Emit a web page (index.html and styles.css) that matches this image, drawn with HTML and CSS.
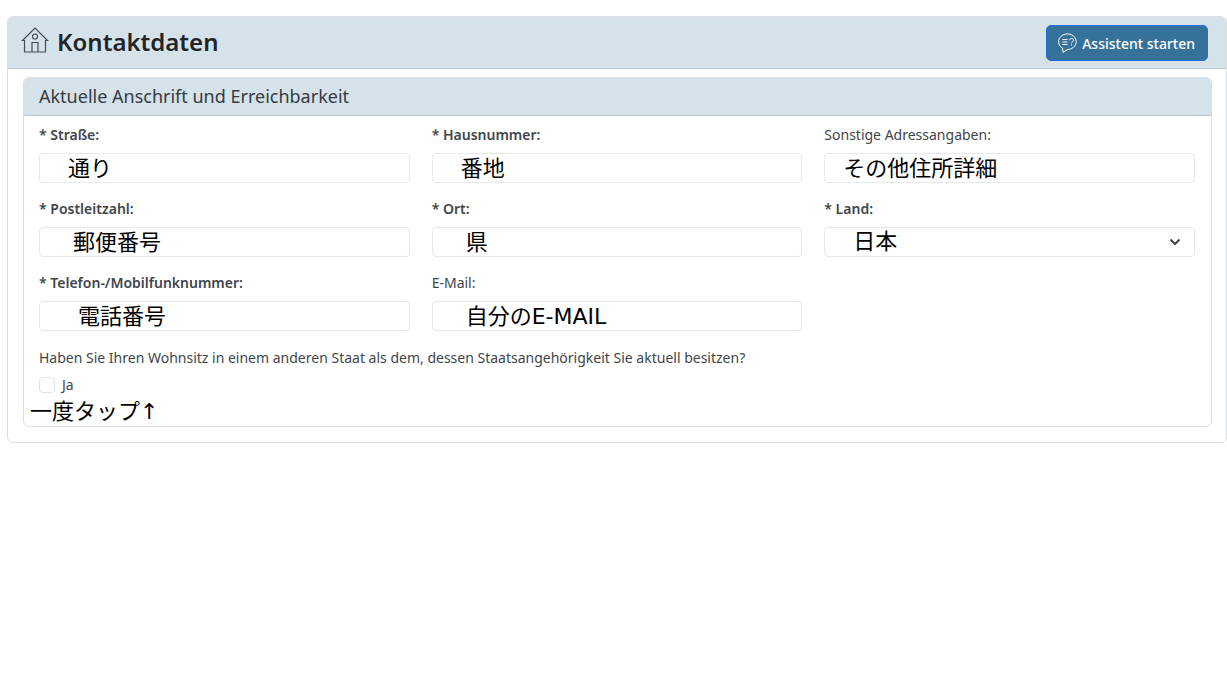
FILE: index.html
```html
<!DOCTYPE html>
<html lang="de">
<head>
<meta charset="UTF-8" />
<meta name="viewport" content="width=device-width, initial-scale=1" />
<title>Kontaktdaten</title>
<link rel="stylesheet" href="styles.css">
</head>
<body>

<main class="card">
  <header class="card-header">
    <svg class="icon-house" viewBox="0 0 28 28" aria-hidden="true">
      <path d="M1.500 15.500 14 3 26.500 15.500H24.500V27H3.500V15.500Z" />
      <circle cx="14" cy="11.500" r="2.500" />
      <path d="M11 27v-9.500h6V27" />
    </svg>
    <h1>Kontaktdaten</h1>
    <button type="button" class="btn-assistant">
      <svg class="icon-chat" viewBox="0 0 20 20" aria-hidden="true">
        <path d="M4.500 15.200A8.800 7.800 0 1 1 9.500 16.500L5 19.300Z" />
        <path d="M4.500 6.500h5M4.500 9h5M4.500 11.500h5" />
        <path d="M11.500 7.200c0-2.200 4-2.200 4 0 0 1.600-2 1.500-2 3.200M13.500 11.600v1" />
      </svg>
      Assistent starten
    </button>
  </header>

  <form class="panel">
    <h2 class="panel-header">Aktuelle Anschrift und Erreichbarkeit</h2>
    <div class="panel-body">
      <div class="fields">
        <div class="field">
          <label class="required" for="strasse">* Straße:</label>
          <input type="text" id="strasse" value="通り">
        </div>
        <div class="field">
          <label class="required" for="hausnummer">* Hausnummer:</label>
          <input type="text" id="hausnummer" value="番地">
        </div>
        <div class="field">
          <label for="sonstige">Sonstige Adressangaben:</label>
          <input type="text" class="indent-small" id="sonstige" value="その他住所詳細">
        </div>
        <div class="field">
          <label class="required" for="plz">* Postleitzahl:</label>
          <input type="text" class="indent-medium" id="plz" value="郵便番号">
        </div>
        <div class="field">
          <label class="required" for="ort">* Ort:</label>
          <input type="text" class="indent-medium" id="ort" value="県">
        </div>
        <div class="field">
          <label class="required" for="land">* Land:</label>
          <div class="select-wrap">
            <select id="land">
              <option>日本</option>
            </select>
            <svg class="icon-chevron" viewBox="0 0 12 8" aria-hidden="true">
              <path d="M1.500 1.500 6 6l4.500-4.500" />
            </svg>
          </div>
        </div>
        <div class="field">
          <label class="required" for="telefon">* Telefon-/Mobilfunknummer:</label>
          <input type="text" class="indent-large" id="telefon" value="電話番号">
        </div>
        <div class="field">
          <label for="email">E-Mail:</label>
          <input type="text" class="indent-medium" id="email" value="自分のE-MAIL">
        </div>
      </div>

      <fieldset class="question">
        <legend>Haben Sie Ihren Wohnsitz in einem anderen Staat als dem, dessen Staatsangehörigkeit Sie aktuell besitzen?</legend>
        <label class="check"><input type="checkbox" id="wohnsitz"> Ja</label>
      </fieldset>
    </div>
    <p class="note" lang="ja">一度タップ↑</p>
  </form>
</main>

</body>
</html>
```
FILE: styles.css
```css
* {
  box-sizing: border-box;
}
body {
  margin: 16px 0 0 7px;
  font-family: "Noto Sans", "Open Sans", sans-serif;
  font-size: 14px;
  line-height: 20px;
  color: #3f454b;
  background: #fff;
}
.card {
  border: 1px solid #dcdfe1;
  border-radius: 6px;
  padding-bottom: 15px;
}
.card-header {
  display: flex;
  align-items: flex-start;
  gap: 8px;
  padding: 8px 18px 7px 13px;
  background: #d6e2ea;
  border-bottom: 1px solid #bac8d3;
  border-radius: 5px 5px 0 0;
}
h1 {
  margin: 0;
  font-size: 24px;
  line-height: 34px;
  font-weight: 600;
  color: #212529;
}
svg {
  fill: none;
  stroke: currentColor;
  flex: none;
}
.icon-house {
  width: 28px;
  height: 28px;
  color: #454c53;
  stroke-width: 1.2;
}
.btn-assistant {
  display: flex;
  align-items: center;
  gap: 4px;
  margin-left: auto;
  height: 36px;
  padding: 0 12px 0 11px;
  font: 500 14px "Noto Sans", "Open Sans", sans-serif;
  color: #fff;
  background: #367199;
  border: 1px solid #1c6fe8;
  border-radius: 5px;
  cursor: pointer;
}
.icon-chat {
  width: 20px;
  height: 20px;
}
.panel {
  margin: 8px 14px 0 15px;
  border: 1px solid #dcdfe1;
  border-radius: 6px;
}
.panel-header {
  margin: 0;
  padding: 6px 15px;
  font-size: 18px;
  line-height: 25px;
  font-weight: 400;
  color: #353b41;
  background: #d6e2ea;
  border-bottom: 1px solid #bac8d3;
  border-radius: 5px 5px 0 0;
}
.panel-body {
  padding: 9px 16px 0 15px;
}
.fields {
  display: grid;
  grid-template-columns: repeat(3, 1fr);
  gap: 16px 22px;
}
.field label {
  display: block;
  margin-bottom: 8px;
}
.field .required {
  font-weight: 600;
}
.field input, .field select {
  display: block;
  width: 100%;
  height: 30px;
  padding: 0 28px 4px;
  font: 22px/24px "DejaVu Sans", "Noto Sans CJK JP", sans-serif;
  color: #000;
  background: #fff;
  border: 1px solid #e6e8ea;
  border-radius: 4px;
}
.field .indent-small {
  padding-left: 18px;
}
.field .indent-medium {
  padding-left: 33px;
}
.field .indent-large {
  padding-left: 38px;
}
.select-wrap {
  position: relative;
}
.field select {
  appearance: none;
  padding-bottom: 0;
}
/* arrow lies over the select */
.icon-chevron {
  position: absolute;
  right: 14px;
  top: 11px;
  width: 12px;
  height: 8px;
  stroke-width: 2;
  pointer-events: none;
}
.question {
  margin: 17px 0 0;
  padding: 0;
  border: 0;
}
.question legend {
  padding: 0;
}
.check {
  display: flex;
  align-items: center;
  gap: 7px;
  margin-top: 7px;
}
.check input {
  appearance: none;
  width: 16px;
  height: 16px;
  margin: 0;
  background: #fff;
  border: 1px solid #e0e3e6;
  border-radius: 4px;
}
.note {
  margin: 3px 0 0 6px;
  font: 22px/28px "DejaVu Sans", "Noto Sans CJK JP", sans-serif;
  color: #000;
}
```
